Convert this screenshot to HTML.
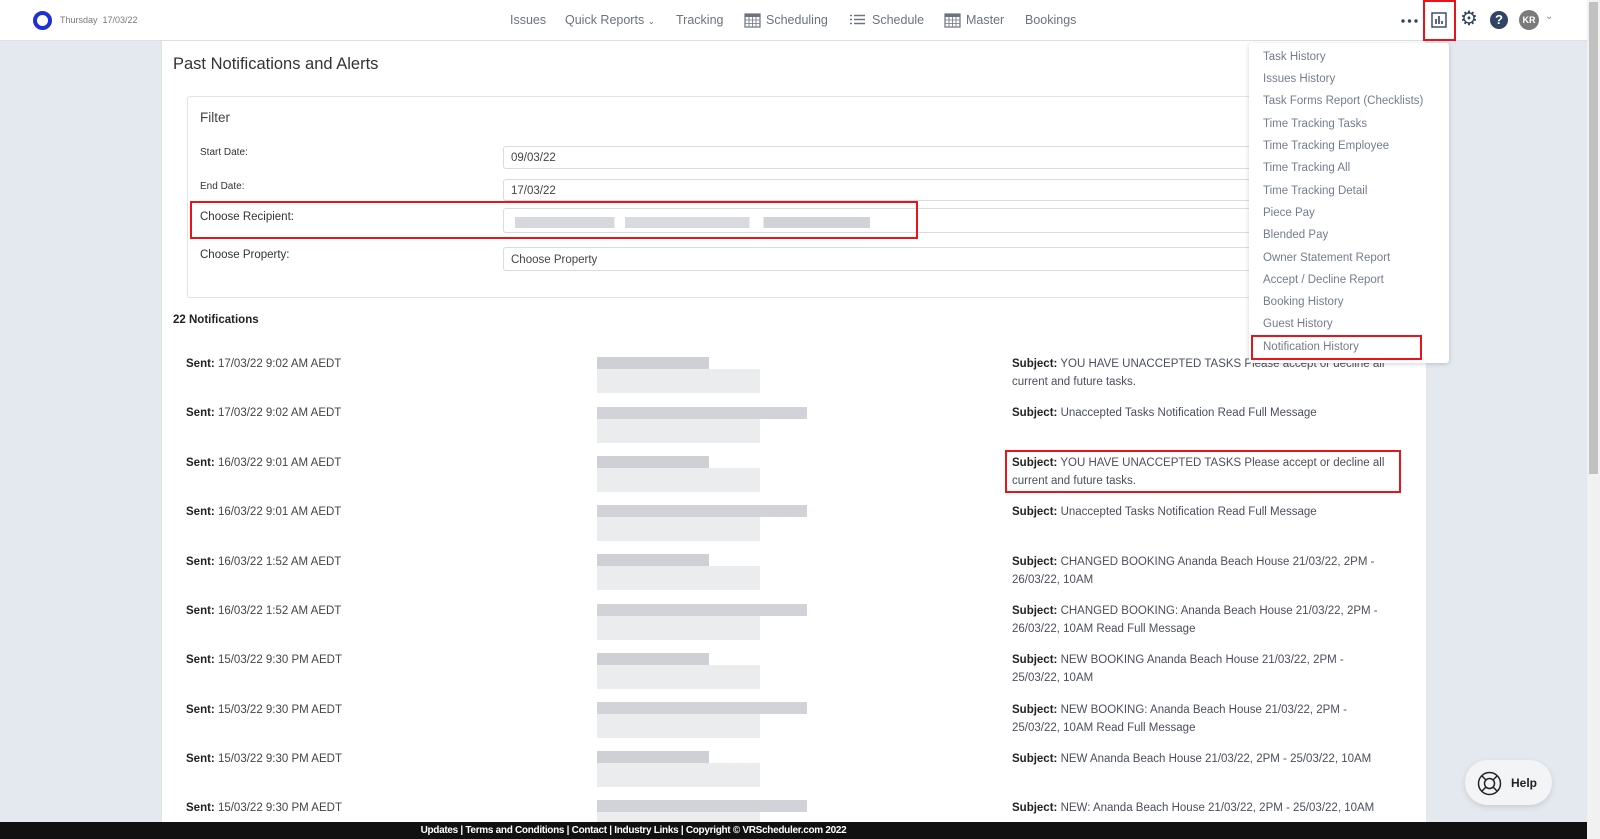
<!DOCTYPE html>
<html><head><meta charset="utf-8"><style>
*{box-sizing:border-box;margin:0;padding:0}
body{width:1600px;height:839px;overflow:hidden;background:#e4e8ef;font-family:"Liberation Sans",sans-serif;position:relative;color:#333}
.abs{position:absolute}
.nav{left:0;top:0;width:1587px;height:41px;background:#fff;border-bottom:1px solid #dde1e7}
.nl{position:absolute;top:13px;font-size:12.5px;color:#6b7280;white-space:nowrap}
.panel{left:161px;top:41px;width:1265px;height:781px;background:#fff;border-left:1px solid #dfe2e6}
.lbl{position:absolute;left:200px;font-size:11px;color:#333}
.inp{position:absolute;left:503px;width:900px;border:1px solid #d8dbe0;border-radius:3px;font-size:11.5px;color:#444;padding:6px 7px}
.sent{position:absolute;left:186px;font-size:11.5px;color:#444}
.sent b,.subj b{color:#222}
.subj{position:absolute;left:1012px;font-size:11.5px;color:#4a4f5c;line-height:17.5px;white-space:nowrap}
.bl{position:absolute;left:597px;height:12px}
.red{position:absolute;border:2px solid #e8131b}
.dd{left:1249px;top:43px;width:200px;height:320px;background:#fff;box-shadow:0 1px 5px rgba(0,0,0,.18);border-radius:3px}
.dd div{position:absolute;left:14px;font-size:11.5px;color:#737c8e;white-space:nowrap}
</style></head><body>
<div class="abs nav">
 <div class="abs" style="left:33px;top:11px;width:19px;height:19px;border-radius:50%;border:4px solid #1e2fd6"></div>
 <div class="nl" style="left:60px;top:15px;font-size:9px;color:#777">Thursday&nbsp; 17/03/22</div>
 <div class="nl" style="left:510px">Issues</div>
 <div class="nl" style="left:565px">Quick Reports <span style="font-size:9px">&#8964;</span></div>
 <div class="nl" style="left:676px">Tracking</div>
 <svg class="abs" style="left:744px;top:12px" width="17" height="16" viewBox="0 0 17 16"><rect x="1" y="2" width="15" height="13" fill="none" stroke="#6b7280" stroke-width="1.2"/><rect x="1" y="2" width="15" height="3" fill="#6b7280"/><path d="M1 8h15M1 11.5h15M5 5v10M8.5 5v10M12 5v10" stroke="#6b7280" stroke-width=".8"/></svg>
 <div class="nl" style="left:766px">Scheduling</div>
 <svg class="abs" style="left:850px;top:14px" width="16" height="12"><path d="M0 1.5h2M0 5.5h2M0 9.5h2M4 1.5h11M4 5.5h11M4 9.5h11" stroke="#6b7280" stroke-width="1.6"/></svg>
 <div class="nl" style="left:872px">Schedule</div>
 <svg class="abs" style="left:944px;top:12px" width="17" height="16" viewBox="0 0 17 16"><rect x="1" y="2" width="15" height="13" fill="none" stroke="#6b7280" stroke-width="1.2"/><rect x="1" y="2" width="15" height="3" fill="#6b7280"/><path d="M1 8h15M1 11.5h15M5 5v10M8.5 5v10M12 5v10" stroke="#6b7280" stroke-width=".8"/></svg>
 <div class="nl" style="left:966px">Master</div>
 <div class="nl" style="left:1025px">Bookings</div>
 <svg class="abs" style="left:1401px;top:19px" width="17" height="4"><circle cx="2" cy="2" r="1.7" fill="#2f4563"/><circle cx="8.5" cy="2" r="1.7" fill="#2f4563"/><circle cx="15" cy="2" r="1.7" fill="#2f4563"/></svg>
 <svg class="abs" style="left:1431px;top:12px" width="16" height="16"><rect x="1" y="1" width="14" height="14" fill="none" stroke="#2f4563" stroke-width="1.4"/><path d="M5 12V7M8 12V4M11 12V9" stroke="#2f4563" stroke-width="1.6"/></svg>
 <div class="abs" style="left:1460px;top:9px;font-size:20px;color:#2f4563;line-height:20px">&#9881;</div>
 <div class="abs" style="left:1490px;top:11px;width:18px;height:18px;border-radius:50%;background:#2f4563;color:#fff;font-size:13px;font-weight:bold;text-align:center;line-height:18px">?</div>
 <div class="abs" style="left:1519px;top:10px;width:20px;height:20px;border-radius:50%;background:#7a7a7a;color:#fff;font-size:9px;font-weight:bold;text-align:center;line-height:20px">KR</div>
 <div class="nl" style="left:1545px;top:11px;font-size:10px;color:#888">&#8964;</div>
</div>
<div class="abs panel"></div>
<div class="abs" style="left:173px;top:55px;font-size:16.5px;color:#333">Past Notifications and Alerts</div>
<div class="abs" style="left:187px;top:96px;width:1230px;height:202px;border:1px solid #e0e3e7;border-radius:3px"></div>
<div class="abs" style="left:200px;top:110px;font-size:13.5px;color:#444">Filter</div>
<div class="lbl" style="top:147px;font-size:10px">Start Date:</div>
<div class="lbl" style="top:181px;font-size:10px">End Date:</div>
<div class="lbl" style="top:211px;font-size:11.5px">Choose Recipient:</div>
<div class="lbl" style="top:249px;font-size:11.5px">Choose Property:</div>
<div class="inp" style="top:146px;height:23px;padding:5px 7px">09/03/22</div>
<div class="inp" style="top:179px;height:22px;padding:5px 7px">17/03/22</div>
<div class="inp" style="top:208px;height:25px"><div style="margin:2px 4px;width:355px;height:11px;background:linear-gradient(90deg,#d6d8dd 0 28%,#fff 28% 31%,#d9dadf 31% 66%,#fff 66% 70%,#d2d3d8 70%)"></div></div>
<div class="inp" style="top:247px;height:24px">Choose Property</div>
<div class="abs" style="left:173px;top:314px;font-size:11.5px;font-weight:bold;color:#222">22 Notifications</div>
<div class="sent" style="top:358px"><b>Sent:</b> 17/03/22 9:02 AM AEDT</div>
<div class="sent" style="top:407px"><b>Sent:</b> 17/03/22 9:02 AM AEDT</div>
<div class="sent" style="top:457px"><b>Sent:</b> 16/03/22 9:01 AM AEDT</div>
<div class="sent" style="top:506px"><b>Sent:</b> 16/03/22 9:01 AM AEDT</div>
<div class="sent" style="top:556px"><b>Sent:</b> 16/03/22 1:52 AM AEDT</div>
<div class="sent" style="top:605px"><b>Sent:</b> 16/03/22 1:52 AM AEDT</div>
<div class="sent" style="top:654px"><b>Sent:</b> 15/03/22 9:30 PM AEDT</div>
<div class="sent" style="top:704px"><b>Sent:</b> 15/03/22 9:30 PM AEDT</div>
<div class="sent" style="top:753px"><b>Sent:</b> 15/03/22 9:30 PM AEDT</div>
<div class="sent" style="top:802px"><b>Sent:</b> 15/03/22 9:30 PM AEDT</div>
<div class="bl" style="top:357px;width:112px;background:#cfd0d6"></div><div class="bl" style="top:369px;width:163px;height:24px;background:#ebecee"></div>
<div class="bl" style="top:407px;width:210px;background:#d2d3d8"></div><div class="bl" style="top:419px;width:163px;height:24px;background:#ebecee"></div>
<div class="bl" style="top:456px;width:112px;background:#cfd0d6"></div><div class="bl" style="top:468px;width:163px;height:24px;background:#ebecee"></div>
<div class="bl" style="top:505px;width:210px;background:#d2d3d8"></div><div class="bl" style="top:517px;width:163px;height:24px;background:#ebecee"></div>
<div class="bl" style="top:554px;width:112px;background:#cfd0d6"></div><div class="bl" style="top:566px;width:163px;height:24px;background:#ebecee"></div>
<div class="bl" style="top:604px;width:210px;background:#d2d3d8"></div><div class="bl" style="top:616px;width:163px;height:24px;background:#ebecee"></div>
<div class="bl" style="top:653px;width:112px;background:#cfd0d6"></div><div class="bl" style="top:665px;width:163px;height:24px;background:#ebecee"></div>
<div class="bl" style="top:702px;width:210px;background:#d2d3d8"></div><div class="bl" style="top:714px;width:163px;height:24px;background:#ebecee"></div>
<div class="bl" style="top:751px;width:112px;background:#cfd0d6"></div><div class="bl" style="top:763px;width:163px;height:24px;background:#ebecee"></div>
<div class="bl" style="top:800px;width:210px;background:#d2d3d8"></div><div class="bl" style="top:812px;width:163px;height:10px;background:#ebecee"></div>
<div class="subj" style="top:356px"><b>Subject:</b> YOU HAVE UNACCEPTED TASKS Please accept or decline all<br>current and future tasks.</div>
<div class="subj" style="top:405px"><b>Subject:</b> Unaccepted Tasks Notification Read Full Message</div>
<div class="subj" style="top:455px"><b>Subject:</b> YOU HAVE UNACCEPTED TASKS Please accept or decline all<br>current and future tasks.</div>
<div class="subj" style="top:504px"><b>Subject:</b> Unaccepted Tasks Notification Read Full Message</div>
<div class="subj" style="top:554px"><b>Subject:</b> CHANGED BOOKING Ananda Beach House 21/03/22, 2PM -<br>26/03/22, 10AM</div>
<div class="subj" style="top:603px"><b>Subject:</b> CHANGED BOOKING: Ananda Beach House 21/03/22, 2PM -<br>26/03/22, 10AM Read Full Message</div>
<div class="subj" style="top:652px"><b>Subject:</b> NEW BOOKING Ananda Beach House 21/03/22, 2PM -<br>25/03/22, 10AM</div>
<div class="subj" style="top:702px"><b>Subject:</b> NEW BOOKING: Ananda Beach House 21/03/22, 2PM -<br>25/03/22, 10AM Read Full Message</div>
<div class="subj" style="top:751px"><b>Subject:</b> NEW Ananda Beach House 21/03/22, 2PM - 25/03/22, 10AM</div>
<div class="subj" style="top:800px"><b>Subject:</b> NEW: Ananda Beach House 21/03/22, 2PM - 25/03/22, 10AM</div>
<div class="abs dd">
 <div style="top:8px">Task History</div><div style="top:30px">Issues History</div><div style="top:52px">Task Forms Report (Checklists)</div>
 <div style="top:75px">Time Tracking Tasks</div><div style="top:97px">Time Tracking Employee</div><div style="top:119px">Time Tracking All</div>
 <div style="top:142px">Time Tracking Detail</div><div style="top:164px">Piece Pay</div><div style="top:186px">Blended Pay</div>
 <div style="top:209px">Owner Statement Report</div><div style="top:231px">Accept / Decline Report</div><div style="top:253px">Booking History</div>
 <div style="top:275px">Guest History</div><div style="top:298px">Notification History</div>
</div>
<div class="red" style="left:190px;top:201px;width:728px;height:38px"></div>
<div class="red" style="left:1005px;top:450px;width:396px;height:43px"></div>
<div class="red" style="left:1423px;top:0;width:33px;height:41px"></div>
<div class="red" style="left:1251px;top:335px;width:171px;height:25px"></div>
<div class="abs" style="left:1465px;top:760px;width:87px;height:45px;border-radius:23px;background:#f3f4f6;box-shadow:0 2px 6px rgba(0,0,0,.12)"></div>
<svg class="abs" style="left:1477px;top:771px" width="25" height="25" viewBox="0 0 25 25" fill="none" stroke="#222" stroke-width="1.5"><circle cx="12.5" cy="12.5" r="11"/><circle cx="12.5" cy="12.5" r="5"/><path d="M5 5l4 4M20 5l-4 4M5 20l4-4M20 20l-4-4"/></svg>
<div class="abs" style="left:1511px;top:776px;font-size:12px;font-weight:bold;color:#222">Help</div>
<div class="abs" style="left:0;top:822px;width:1587px;height:17px;background:#111;color:#fff;font-size:10px;font-weight:bold;text-align:center;line-height:17px;padding-right:320px;letter-spacing:-0.3px">Updates | Terms and Conditions | Contact | Industry Links | Copyright © VRScheduler.com 2022</div>
<div class="abs" style="left:1587px;top:0;width:13px;height:839px;background:#f1f1f1"></div>
<div class="abs" style="left:1589px;top:2px;width:9px;height:472px;background:#c1c1c1"></div>
</body></html>
